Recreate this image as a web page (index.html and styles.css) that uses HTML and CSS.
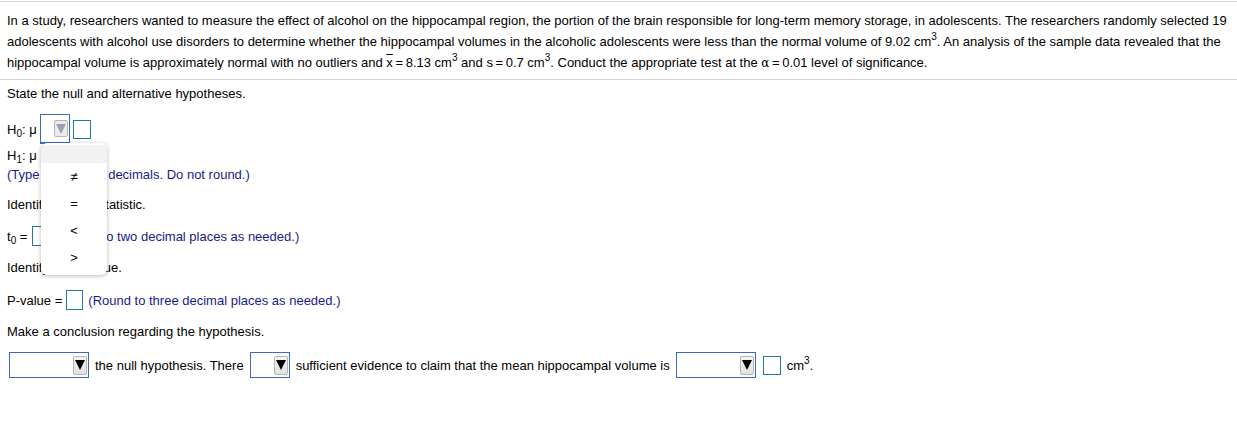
FILE: index.html
```html
<!DOCTYPE html>
<html>
<head>
<meta charset="utf-8">
<link rel="stylesheet" href="styles.css">
</head>
<body>
<div class="problem">
In a study, researchers wanted to measure the effect of alcohol on the hippocampal region, the portion of the brain responsible for long-term memory storage, in adolescents. The researchers randomly selected 19 adolescents with alcohol use disorders to determine whether the hippocampal volumes in the alcoholic adolescents were less than the normal volume of 9.02 cm<sup>3</sup>. An analysis of the sample data revealed that the hippocampal volume is approximately normal with no outliers and <span class="xbar">x</span>&#8201;=&#8201;8.13 cm<sup>3</sup> and s&#8201;=&#8201;0.7 cm<sup>3</sup>. Conduct the appropriate test at the <span class="alpha">α</span>&#8201;=&#8201;0.01 level of significance.
</div>
<div class="content">
  <div class="line first">State the null and alternative hypotheses.</div>

  <div class="hrow h0">
    <span class="lbl">H<sub>0</sub>: μ</span>
    <span class="selwrap">
      <span class="sel small active"><span class="btn"><span class="tri gray"></span></span></span>
      <div class="popup">
        <div class="opt hl"></div>
        <div class="opt">≠</div>
        <div class="opt">=</div>
        <div class="opt">&lt;</div>
        <div class="opt">&gt;</div>
      </div>
    </span>
    <span class="inp"></span>
  </div>
  <div class="hrow h1">
    <span class="lbl">H<sub>1</sub>: μ</span>
  </div>
  <div class="line note tight">(Type integers or decimals. Do not round.)</div>

  <div class="line gap">Identify the test statistic.</div>
  <div class="frow t0row">
    <span class="lbl t0l">t<sub>0</sub> =</span><span class="inp t0"></span><span class="note">(Round to two decimal places as needed.)</span>
  </div>
  <div class="line gap">Identify the P-value.</div>
  <div class="frow pvrow">
    <span class="lbl">P-value =</span><span class="inp pv"></span><span class="note">(Round to three decimal places as needed.)</span>
  </div>
  <div class="line gap">Make a conclusion regarding the hypothesis.</div>
  <div class="brow">
    <span class="sel wide"><span class="btn"><span class="tri"></span></span></span>
    <span>the null hypothesis. There</span>
    <span class="sel mid"><span class="btn"><span class="tri"></span></span></span>
    <span>sufficient evidence to claim that the mean hippocampal volume is</span>
    <span class="sel wide"><span class="btn"><span class="tri"></span></span></span>
    <span class="inp bi"></span>
    <span>cm<sup>3</sup>.</span>
  </div>
</div>
</body>
</html>
```
FILE: styles.css
```css
body {
  margin: 0;
  font-family: "Liberation Sans", Arial, sans-serif;
  font-size: 13px;
  color: #000;
  background: #fff;
}
sup { font-size: 10px; vertical-align: 6px; line-height: 0; }
sub { font-size: 10px; vertical-align: -3px; line-height: 0; }
.problem {
  margin-top: 1px;
  border-top: 1px solid #d4d4d4;
  border-bottom: 1px solid #d4d4d4;
  padding: 8px 7px 5px 7px;
  line-height: 21px;
}
.xbar { text-decoration: overline; }
.alpha { font-family: "DejaVu Serif", serif; font-size: 12px; }
.content { padding-left: 7px; position: relative; }
.line { height: 16px; line-height: 16px; }
.line.first { margin-top: 6px; }
.line.gap { margin-top: 14px; }
.line.tight { margin-top: 1px; }
.note { color: #1a1a8c; }
.hrow { display: flex; align-items: center; }
.h0 { margin-top: 12px; height: 30px; }
.h1 { height: 22px; }
.lbl { margin-right: 2px; }
.h0 .lbl, .h1 .lbl { width: 31px; margin-right: 2px; }
.selwrap { position: relative; display: inline-block; }
.sel {
  display: inline-flex;
  align-items: center;
  justify-content: flex-end;
  box-sizing: border-box;
  border: 1px solid #3b68c8;
  background: #fff;
  padding-right: 1px;
}
.sel.small { width: 30px; height: 30px; border-width: 1px 1px 2px 1px; padding-right: 1px; }
.sel.wide { width: 80px; height: 26px; }
.sel.mid { width: 40px; height: 26px; }
.btn {
  display: flex;
  align-items: center;
  justify-content: center;
  width: 14px;
  height: 19px;
  box-sizing: border-box;
  border: 1px solid #b5b5b5;
  border-radius: 2px;
  background: linear-gradient(#f4f4f4, #e2e2e2);
}
.sel.small .btn { height: 17px; background: #ececec; }
.tri {
  width: 0; height: 0;
  border-left: 5px solid transparent;
  border-right: 5px solid transparent;
  border-top: 10px solid #000;
}
.tri.gray { border-top-color: #9aa3b4; }
.inp {
  display: inline-block;
  box-sizing: border-box;
  width: 18px;
  height: 19px;
  border: 1px solid #1f7a9c;
  background: #fff;
}
.h0 .inp { margin-left: 3px; }
.popup {
  position: absolute;
  left: 1px;
  top: 29px;
  width: 66px;
  box-sizing: border-box;
  padding: 2px 0 4px 0;
  background: #fff;
  border-radius: 6px;
  box-shadow: 0 1px 4px rgba(0,0,0,0.28);
  z-index: 5;
  font-size: 13px;
}
.opt { height: 27px; line-height: 27px; text-align: center; }
.opt.hl { height: 18px; background: #f2f2f2; }
.frow { display: flex; align-items: center; height: 20px; }
.frow.t0row { margin-top: 13px; }
.frow.pvrow { margin-top: 14px; }
.frow .lbl { margin-right: 4px; }
.frow .lbl.t0l { margin-right: 5px; }
.inp.t0 { width: 18px; height: 20px; margin-right: 6px; }
.inp.pv { width: 17px; height: 20px; margin-right: 5px; }
.brow {
  display: flex;
  align-items: center;
  gap: 6px;
  margin-top: 12px;
  margin-left: 2px;
  height: 26px;
}
.inp.bi { margin-left: 1px; height: 19px; }
```
